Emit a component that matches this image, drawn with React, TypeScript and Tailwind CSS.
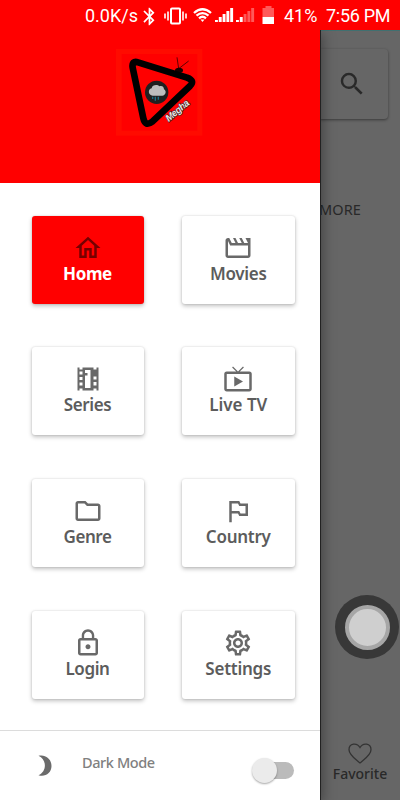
import type { ReactNode } from 'react';
import {
  MdBluetooth,
  MdLiveTv,
  MdLockOutline,
  MdOutlineFolder,
  MdOutlineHome,
  MdOutlineMovie,
  MdOutlineSettings,
  MdOutlinedFlag,
  MdSearch,
} from 'react-icons/md';

interface MenuCardProps {
  label: string;
  icon: ReactNode;
  spacing: string;
  active?: boolean;
}

function MenuCard({ label, icon, spacing, active }: MenuCardProps) {
  return (
    <button
      className={`flex h-[88px] flex-col items-center rounded-[3px] pt-[17px] shadow-[0_2px_4px_rgba(0,0,0,0.25),0_0_2px_rgba(0,0,0,0.14)] ${
        active ? 'bg-[#ff0000] text-[#750000]' : 'bg-white text-[#696969]'
      }`}
    >
      <span className="flex h-[30px] items-center">{icon}</span>
      <span
        className={`whitespace-nowrap text-[17px] leading-[22px] ${spacing} ${
          active ? 'font-bold text-white' : 'font-semibold text-[#5c5c5c]'
        }`}
      >
        {label}
      </span>
    </button>
  );
}

function SeriesIcon() {
  return (
    <svg width="30" height="30" viewBox="0 0 30 30" fill="currentColor">
      <path
        fillRule="evenodd"
        d="M4.500 3.500h2v2h3v-2h11v2h3v-2h2v23h-2v-2h-3v2h-11v-2h-3v2h-2zM6.500 7.500v3h3v-3zM6.500 13v3h3v-3zM6.500 18.500v3h3v-3zM20.500 12.500v3h3v-3zM20.500 18v3.500h3V18zM12 6h5.500v18H12z"
      />
      <path d="M12 9h2.500v2.500H12z" />
    </svg>
  );
}

function Signal({ weak }: { weak?: boolean }) {
  const bars = [2, 5, 8, 11, 14];
  return (
    <svg width="19" height="16" viewBox="0 0 19 16" fill="white">
      {bars.map((h, i) => (
        <rect key={h} x={i * 3.8} y={15 - h} width="2.900" height={h} opacity={weak && i > 1 ? 0.35 : 1} />
      ))}
    </svg>
  );
}

function StatusBar() {
  return (
    <header className="z-20 flex h-[30px] shrink-0 items-center bg-[#ff0000] pl-[85px] pt-[2px] font-[Roboto,sans-serif] text-[18px] leading-none text-white">
      <span className="w-[54px] whitespace-nowrap">0.0K/s</span>
      <MdBluetooth className="h-[21px] w-[21px]" />
      <svg className="ml-[4px]" width="23" height="18" viewBox="0 0 23 18" fill="none" stroke="white">
        <rect x="7" y="1.500" width="9" height="15" rx="1" strokeWidth="2" />
        <path d="M4 4.500v9M1 6.500v5M19 4.500v9M22 6.500v5" strokeWidth="1.600" />
      </svg>
      <svg className="ml-[6px] mt-[-2px]" width="19" height="15" viewBox="0 0 19 15" fill="none" stroke="white">
        <path d="M1 5Q9.500-2.500 18 5M3.500 7.700Q9.500 2.500 15.500 7.700M6 10.300Q9.500 7.300 13 10.300" strokeWidth="2.300" />
        <path d="M7.500 11.500h4l-2 2.500z" fill="white" stroke="none" />
      </svg>
      <span className="ml-[3px] mt-[-2px]">
        <Signal />
      </span>
      <span className="ml-[2px] mt-[-2px]">
        <Signal weak />
      </span>
      <svg className="ml-[7px] mt-[-2px]" width="13" height="18" viewBox="0 0 13 18" fill="white">
        <path d="M3.500 0h6v2H12v9H.500V2h3z" opacity="0.350" />
        <path d="M.500 11H12v7H.500z" />
      </svg>
      <span className="ml-[9px] w-[42px]">41%</span>
      <span className="whitespace-nowrap tracking-[-0.3px]">7:56 PM</span>
    </header>
  );
}

function Logo() {
  return (
    <svg width="110" height="105" viewBox="0 0 330 315" className="block">
      <rect x="33" y="27" width="259" height="260" fill="#ff0b00" />
      <rect x="50" y="42" width="227" height="230" fill="#ff0000" />
      <path d="M216 52l5 34 30-23" stroke="#400000" strokeWidth="2.500" fill="none" />
      <ellipse cx="222" cy="91" rx="12" ry="8" fill="#160000" />
      <path
        d="M99 67L246 113Q271 122 255 138L142 245Q121 261 115 235L83 83Q80 61 99 67Z"
        fill="none"
        stroke="black"
        strokeWidth="20"
        strokeLinejoin="round"
      />
      <circle cx="155" cy="157" r="35" fill="#202020" />
      <path
        d="M143 167c-13 0-16-19-3-22 1-12 19-12 23-6 10-3 14 4 14 9 9 5 5 19-5 19z"
        fill="#bdbdbd"
      />
      <path d="M143 170v7M151 170v12M160 170v9" stroke="#197085" strokeWidth="4" />
      <text
        x="191"
        y="246"
        transform="rotate(-40 191 246)"
        fontSize="29"
        fontStyle="italic"
        fontWeight="700"
        fontFamily="Liberation Sans, sans-serif"
        fill="#e8e8e8"
        stroke="#4d2020"
        strokeWidth="4"
        paintOrder="stroke"
        textLength="84"
      >
        Megha
      </text>
    </svg>
  );
}

function DarkModeRow() {
  return (
    <div className="flex h-[70px] border-t border-[#dcdcdc]">
      <svg className="ml-[37px] mt-[24px]" width="15" height="22" viewBox="0 0 15 22" fill="#6b6b6b">
        <path d="M1.500.800C8.500-1 14.500 4 14.500 11S8 22.500 1.500 20.200C10 16.500 10 4.500 1.500.800z" />
      </svg>
      <span className="ml-[30px] mt-[21px] w-[171px] text-[14.5px] font-medium leading-[20px] tracking-[-0.4px] text-[#808080]">
        Dark Mode
      </span>
      <div className="mt-[31px] flex h-[17px] w-[41px] items-center rounded-full bg-[#bbbbbb]">
        <span className="-ml-px h-[25px] w-[25px] shrink-0 rounded-full bg-[#ebebeb] shadow-[0_1px_2px_rgba(0,0,0,0.35)]" />
      </div>
    </div>
  );
}

function Drawer() {
  const icon = 'h-[30px] w-[30px]';
  return (
    <aside className="z-10 flex w-[320px] shrink-0 flex-col bg-white shadow-[1px_0_0_#222,3px_3px_12px_rgba(0,0,0,0.35)]">
      <div className="h-[153px] bg-[#ff0000] pl-[105px] pt-[10px]">
        <Logo />
      </div>
      <nav className="grid h-[547px] grid-cols-[112px_112.5px] content-start gap-x-[38.5px] gap-y-[43.8px] pl-[31.5px] pt-[32.5px]">
        <MenuCard active label="Home" spacing="tracking-[-0.4px]" icon={<MdOutlineHome className={icon} />} />
        <MenuCard label="Movies" spacing="tracking-[-0.3px]" icon={<MdOutlineMovie className={icon} />} />
        <MenuCard label="Series" spacing="tracking-[-0.4px]" icon={<SeriesIcon />} />
        <MenuCard label="Live TV" spacing="tracking-[0px]" icon={<MdLiveTv className={icon} />} />
        <MenuCard label="Genre" spacing="tracking-[-0.4px]" icon={<MdOutlineFolder className={icon} />} />
        <MenuCard label="Country" spacing="tracking-[-0.25px]" icon={<MdOutlinedFlag className={icon} />} />
        <MenuCard label="Login" spacing="tracking-[-0.4px]" icon={<MdLockOutline className={icon} />} />
        <MenuCard label="Settings" spacing="tracking-[-0.25px]" icon={<MdOutlineSettings className={icon} />} />
      </nav>
      <DarkModeRow />
    </aside>
  );
}

// Dimmed page that stays visible to the right of the drawer
function DimmedPage() {
  return (
    <main className="flex w-[80px] flex-col border-t border-[#3f7070] bg-[#666666] text-[#292929]">
      <div className="mt-[18px] flex h-[70px] w-[68px] items-center rounded-r-[4px] pl-[17px] shadow-[0_1px_3px_rgba(0,0,0,0.45)]">
        <MdSearch className="h-[30px] w-[30px]" />
      </div>
      <span className="-ml-[1px] mt-[80px] text-[14.5px] leading-[20px] tracking-[0.1px]">MORE</span>
      <div className="ml-[15px] mt-[376px] flex h-[64px] w-[64px] shrink-0 items-center justify-center rounded-full bg-[#383838]">
        <span className="h-[45px] w-[45px] rounded-full border-4 border-[#a6a6a6] bg-[#cfcfcf]" />
      </div>
      <div className="mt-[84px] flex flex-col items-center">
        <svg width="24" height="21" viewBox="0 0 24 21" fill="none" stroke="#333" strokeWidth="1.300">
          <path d="M12 20C8 16.500 1 12 1 6.700C1 0 9-.700 12 4.500C15-.700 23 0 23 6.700C23 12 16 16.500 12 20z" />
        </svg>
        <span className="text-[14px] font-medium leading-[20px]">Favorite</span>
      </div>
    </main>
  );
}

export default function App() {
  return (
    <div className="flex h-[800px] w-[400px] flex-col overflow-hidden bg-white font-['Noto_Sans',sans-serif]">
      <StatusBar />
      <div className="flex h-[770px]">
        <Drawer />
        <DimmedPage />
      </div>
    </div>
  );
}
